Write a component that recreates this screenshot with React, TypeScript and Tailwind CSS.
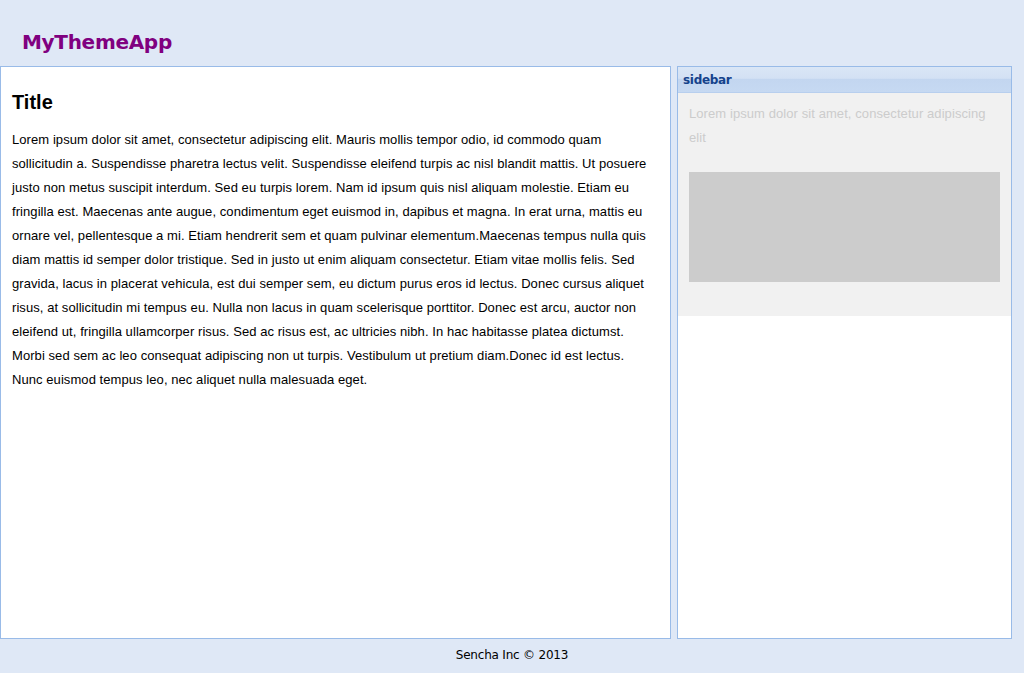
import React from "react";

const lorem =
  "Lorem ipsum dolor sit amet, consectetur adipiscing elit. Mauris mollis tempor odio, id commodo quam sollicitudin a. Suspendisse pharetra lectus velit. Suspendisse eleifend turpis ac nisl blandit mattis. Ut posuere justo non metus suscipit interdum. Sed eu turpis lorem. Nam id ipsum quis nisl aliquam molestie. Etiam eu fringilla est. Maecenas ante augue, condimentum eget euismod in, dapibus et magna. In erat urna, mattis eu ornare vel, pellentesque a mi. Etiam hendrerit sem et quam pulvinar elementum.Maecenas tempus nulla quis diam mattis id semper dolor tristique. Sed in justo ut enim aliquam consectetur. Etiam vitae mollis felis. Sed gravida, lacus in placerat vehicula, est dui semper sem, eu dictum purus eros id lectus. Donec cursus aliquet risus, at sollicitudin mi tempus eu. Nulla non lacus in quam scelerisque porttitor. Donec est arcu, auctor non eleifend ut, fringilla ullamcorper risus. Sed ac risus est, ac ultricies nibh. In hac habitasse platea dictumst. Morbi sed sem ac leo consequat adipiscing non ut turpis. Vestibulum ut pretium diam.Donec id est lectus. Nunc euismod tempus leo, nec aliquet nulla malesuada eget.";

const App: React.FC = () => {
  return (
    <div className="flex flex-col h-screen bg-[#dfe8f6] overflow-hidden">
      {/* header */}
      <div className="h-[66px] flex items-center pl-[22px] pt-[17px]">
        <h1 className="text-[20px] font-bold text-[#800080] font-['DejaVu_Sans',sans-serif] tracking-[-0.3px]">
          MyThemeApp
        </h1>
      </div>

      <div className="flex h-[573px] gap-[6px] pr-[12px]">
        {/* main panel */}
        <div className="w-[671px] border border-[#99bbe8] bg-white pl-[11px] pr-[12px] pt-[24px] font-['Liberation_Sans',Arial,sans-serif] text-black">
          <h2 className="text-[20px] font-bold leading-[23px]">Title</h2>
          <p className="mt-[14px] text-[13px] leading-[24px] tracking-[0.07px]">{lorem}</p>
        </div>

        {/* sidebar */}
        <div className="w-[335px] border border-[#99bbe8] bg-white flex flex-col">
          <div className="h-[26px] flex items-center px-[5px] bg-[linear-gradient(to_bottom,#dae6f6_0%,#d3e1f4_45%,#c3d6f0_50%,#c6d9f2_100%)] border-b border-[#b8cfee]">
            <span className="text-[12px] font-bold text-[#15428b] font-['DejaVu_Sans',sans-serif] tracking-[-0.3px]">
              sidebar
            </span>
          </div>
          <div className="bg-[#f1f1f1] px-[11px] pt-[9px] pb-[34px] font-['Liberation_Sans',Arial,sans-serif]">
            <p className="text-[13px] leading-[24px] text-[#cccccc] tracking-[0.08px]">
              Lorem ipsum dolor sit amet, consectetur adipiscing elit
            </p>
            <div className="mt-[22px] h-[110px] bg-[#cccccc]" />
          </div>
        </div>
      </div>

      {/* footer */}
      <div className="flex-1 flex items-start justify-center pt-[7px]">
        <span className="text-[12px] text-black font-['DejaVu_Sans',sans-serif] tracking-[-0.2px]">
          Sencha Inc © 2013
        </span>
      </div>
    </div>
  );
};

export default App;
